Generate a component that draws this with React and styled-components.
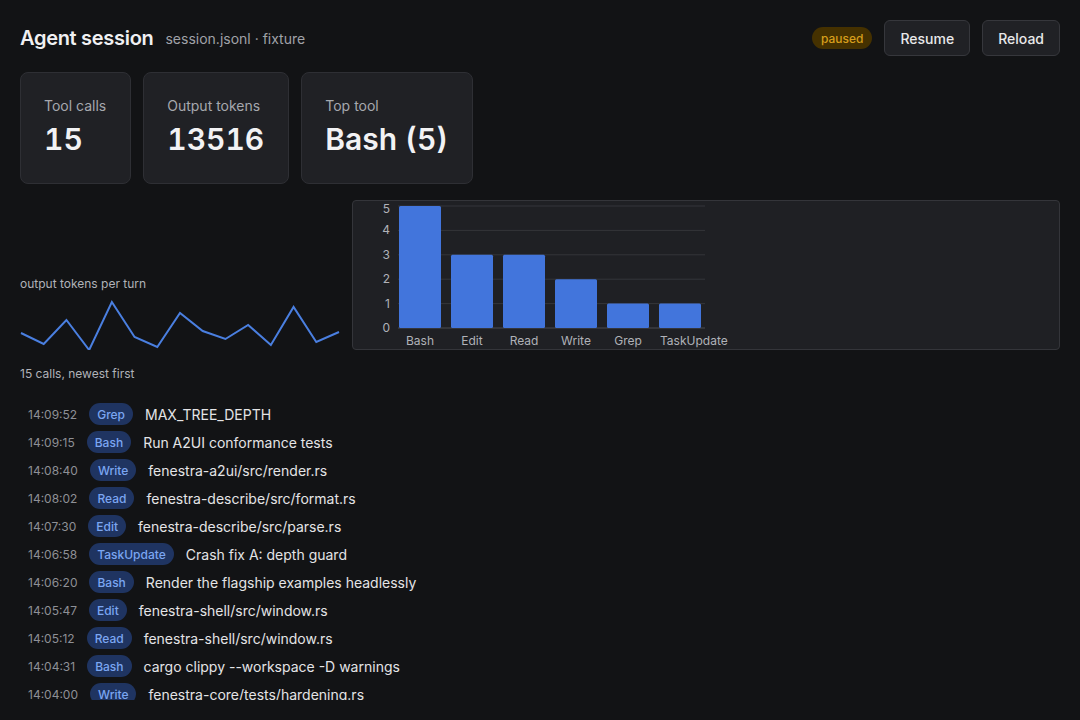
import React from "react";
import styled, { createGlobalStyle } from "styled-components";

const GlobalStyle = createGlobalStyle`
  html, body {
    margin: 0;
    padding: 0;
    background: #121315;
    color: #e8e8ea;
    font-family: Inter, "Noto Sans", sans-serif;
  }
  * { box-sizing: border-box; }
`;

const Page = styled.div`
  height: 100vh;
  padding: 20px;
  display: flex;
  flex-direction: column;
  gap: 16px;
  overflow: hidden;
`;

const Header = styled.header`
  display: flex;
  align-items: center;
  gap: 12px;
  height: 36px;
`;

const Title = styled.h1`
  margin: 0;
  font-size: 20px;
  font-weight: 600;
  letter-spacing: -0.3px;
  color: #f0f0f2;
`;

const Subtitle = styled.span`
  font-size: 14px;
  color: #a0a2a8;
  flex: 1;
`;

const StatusPill = styled.span`
  height: 22px;
  display: inline-flex;
  align-items: center;
  padding: 0 9px;
  border-radius: 11px;
  background: #453100;
  color: #d69e1c;
  font-size: 12px;
  font-weight: 500;
`;

const Button = styled.button`
  height: 36px;
  padding: 0 15px;
  border-radius: 6px;
  border: 1px solid #36373c;
  background: #202125;
  color: #e8e8ea;
  font-family: inherit;
  font-size: 14px;
  font-weight: 500;
`;

const Stats = styled.div`
  display: flex;
  gap: 12px;
`;

const StatCard = styled.div`
  display: flex;
  flex-direction: column;
  gap: 4px;
  padding: 23px 24px 25px 23px;
  border: 1px solid #2e2f34;
  border-radius: 8px;
  background: #202125;
`;

const StatLabel = styled.div`
  font-size: 14px;
  line-height: 20px;
  color: #a6a8ae;
`;

const StatValue = styled.div`
  font-size: 30px;
  line-height: 38px;
  font-weight: 600;
  font-variant-numeric: tabular-nums;
  color: #f2f2f4;
`;

const ChartRow = styled.div`
  display: flex;
  align-items: flex-end;
  gap: 12px;
`;

const SparkBlock = styled.div`
  width: 320px;
  display: flex;
  flex-direction: column;

  svg {
    display: block;
  }
`;

const SmallLabel = styled.div`
  font-size: 12px;
  line-height: 16px;
  color: #b0b2b8;
`;

const ChartPanel = styled.div`
  flex: 1;
  height: 150px;
  border: 1px solid #34353a;
  border-radius: 4px;
  background: #1f2024;

  svg {
    display: block;
  }
`;

const CallList = styled.ul`
  list-style: none;
  margin: 0;
  padding: 2px 0 0 8px;
  flex: 1;
  overflow: hidden;
`;

const CallRow = styled.li`
  display: flex;
  align-items: center;
  gap: 12px;
  height: 28px;
`;

const Time = styled.span`
  font-size: 12px;
  color: #8e9096;
`;

const ToolBadge = styled.span`
  height: 22px;
  display: inline-flex;
  align-items: center;
  padding: 0 8px;
  border-radius: 11px;
  background: #1f3461;
  color: #7ba6f2;
  font-size: 12px;
  font-weight: 500;
`;

const CallText = styled.span`
  font-size: 14px;
  color: #e4e4e6;
`;

const spark = [333, 344, 320, 350, 302, 337, 347, 313, 331, 339, 325, 345, 307, 342, 332];

const Sparkline = () => {
  const step = 318 / 14;
  const pts = spark.map((y, i) => `${1 + i * step},${y - 292}`).join(" ");
  return (
    <svg width="320" height="58" viewBox="0 0 320 58">
      <polyline points={pts} fill="none" stroke="#4a7fe0" strokeWidth="2" />
    </svg>
  );
};

const bars = [
  ["Bash", 5],
  ["Edit", 3],
  ["Read", 3],
  ["Write", 2],
  ["Grep", 1],
  ["TaskUpdate", 1],
];

const BarChart = () => {
  const base = 127;
  const unit = 24.4;
  return (
    <svg width="400" height="148" viewBox="0 0 400 148">
      {[0, 1, 2, 3, 4, 5].map((v) => (
        <g key={v}>
          <line x1="45" x2="352" y1={base - v * unit} y2={base - v * unit} stroke={v === 0 ? "#4a4b50" : "#34353a"} strokeWidth="1" />
          <text x="37" y={Math.max(base - v * unit + 4, 12)} textAnchor="end" fontSize="12" fill="#b0b2b8" fontFamily="Inter, sans-serif">{v}</text>
        </g>
      ))}
      {bars.map(([name, n], i) => {
        const x = 46 + i * 52;
        const h = n * unit;
        const last = i === bars.length - 1;
        return (
          <g key={name}>
            <rect x={x} y={base - h} width="42" height={h} rx="1.5" fill="#4275dc" />
            <text x={last ? x + 1 : x + 21} y="144" textAnchor={last ? "start" : "middle"} fontSize="12" fill="#b0b2b8" fontFamily="Inter, sans-serif">{name}</text>
          </g>
        );
      })}
    </svg>
  );
};

const calls = [
  ["14:09:52", "Grep", "MAX_TREE_DEPTH"],
  ["14:09:15", "Bash", "Run A2UI conformance tests"],
  ["14:08:40", "Write", "fenestra-a2ui/src/render.rs"],
  ["14:08:02", "Read", "fenestra-describe/src/format.rs"],
  ["14:07:30", "Edit", "fenestra-describe/src/parse.rs"],
  ["14:06:58", "TaskUpdate", "Crash fix A: depth guard"],
  ["14:06:20", "Bash", "Render the flagship examples headlessly"],
  ["14:05:47", "Edit", "fenestra-shell/src/window.rs"],
  ["14:05:12", "Read", "fenestra-shell/src/window.rs"],
  ["14:04:31", "Bash", "cargo clippy --workspace -D warnings"],
  ["14:04:00", "Write", "fenestra-core/tests/hardening.rs"],
  ["14:03:22", "Bash", "cargo test --workspace"],
  ["14:02:45", "Read", "fenestra-core/src/lib.rs"],
  ["14:02:10", "Edit", "fenestra-core/src/tree.rs"],
  ["14:01:33", "Bash", "git status"],
];

const App = () => {
  return (
    <>
      <GlobalStyle />
      <Page>
        <Header>
          <Title>Agent session</Title>
          <Subtitle>session.jsonl · fixture</Subtitle>
          <StatusPill>paused</StatusPill>
          <Button>Resume</Button>
          <Button>Reload</Button>
        </Header>
        <Stats>
          <StatCard>
            <StatLabel>Tool calls</StatLabel>
            <StatValue>15</StatValue>
          </StatCard>
          <StatCard>
            <StatLabel>Output tokens</StatLabel>
            <StatValue>13516</StatValue>
          </StatCard>
          <StatCard>
            <StatLabel>Top tool</StatLabel>
            <StatValue>Bash (5)</StatValue>
          </StatCard>
        </Stats>
        <ChartRow>
          <SparkBlock>
            <SmallLabel>output tokens per turn</SmallLabel>
            <Sparkline />
          </SparkBlock>
          <ChartPanel>
            <BarChart />
          </ChartPanel>
        </ChartRow>
        <SmallLabel>15 calls, newest first</SmallLabel>
        <CallList>
          {calls.map(([t, tool, text]) => (
            <CallRow key={t}>
              <Time>{t}</Time>
              <ToolBadge>{tool}</ToolBadge>
              <CallText>{text}</CallText>
            </CallRow>
          ))}
        </CallList>
      </Page>
    </>
  );
};

export default App;
